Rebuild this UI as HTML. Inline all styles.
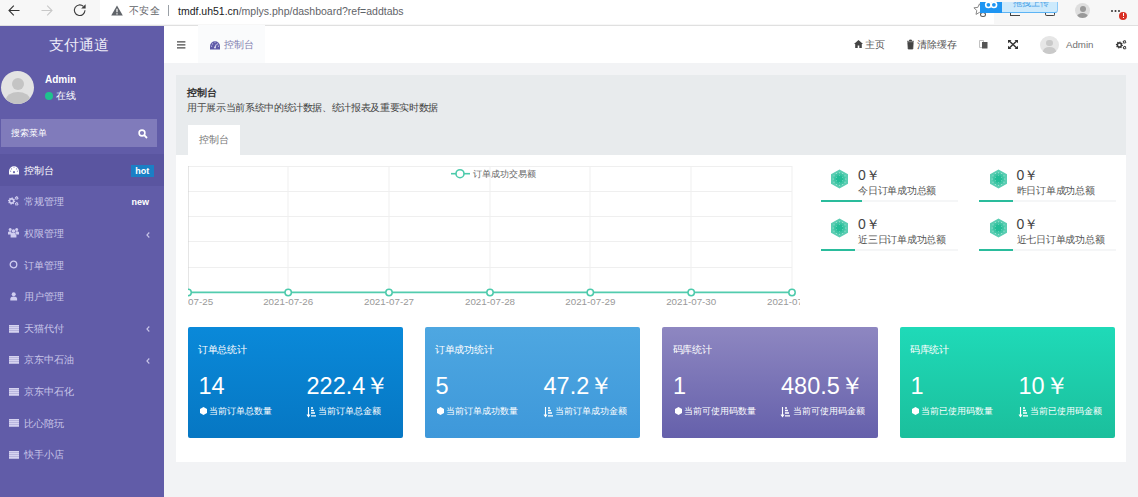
<!DOCTYPE html>
<html><head><meta charset="utf-8">
<style>
*{margin:0;padding:0;box-sizing:border-box}
html,body{width:1138px;height:497px;overflow:hidden;background:#f2f3f5;font-family:"Liberation Sans",sans-serif;position:relative}
.a{position:absolute;white-space:nowrap}
svg{position:absolute;overflow:visible}
/* browser bar */
#bb{left:0;top:0;width:1138px;height:25.5px;background:#f7f7f7;border-bottom:1px solid #e0e0e0}
#addr{left:100px;top:0;width:894px;height:24px;background:#fff}
.url{top:3.5px;font-size:10.5px;color:#5f6368;line-height:14px}
/* sidebar */
#sb{left:0;top:25.5px;width:164.2px;height:472px;background:#615ca8}
.mi{position:absolute;left:0;width:164.2px;height:31.6px;color:#cac7e8;font-size:10px}
.mi .tx{position:absolute;left:24px;top:10.5px;line-height:12px}
.mi svg{left:9px;top:11.5px}
.mi .ar{position:absolute;left:145px;top:12px;font-size:10px;line-height:12px}
/* header */
#hd{left:164.2px;top:25.5px;width:973.8px;height:37.5px;background:#fff}
.hx{top:38px;font-size:10px;color:#555;line-height:13px}
/* card */
#card{left:176px;top:74.5px;width:950px;height:387.5px;background:#fff}
#cardh{left:176px;top:74.5px;width:950px;height:80.3px;background:#e8ebed}
.sc{position:absolute;top:327px;width:215.5px;height:111px;border-radius:2px;color:#fff}
.sc .t{position:absolute;left:10.5px;top:16.2px;font-size:10px;letter-spacing:-0.3px}
.sc .n{position:absolute;top:45px;font-size:23.5px;line-height:28px}
.sc .l{position:absolute;top:78px;font-size:9px}
.sc svg{top:80px}
.st{position:absolute;width:137px;height:50px}
.st .v{position:absolute;left:37.5px;top:1px;font-size:14px;color:#444;line-height:16px}
.st .d{position:absolute;left:37.5px;top:17.5px;font-size:10px;letter-spacing:-0.25px;color:#555;line-height:13px}
.st .bar{position:absolute;left:0;top:34px;width:137px;height:2px;background:#f5f6f7}
.st .bar i{position:absolute;left:0;top:0;height:2px;background:#2abc9c}
</style></head><body>
<!-- browser bar -->
<div class="a" id="bb"></div>
<div class="a" id="addr"></div>
<svg style="left:8px;top:5px" width="12" height="11" viewBox="0 0 12 11"><path d="M11.5 5.5H1.2M5.8 0.6L1 5.5l4.8 4.9" fill="none" stroke="#333" stroke-width="1.1"/></svg>
<svg style="left:41px;top:5px" width="12" height="11" viewBox="0 0 12 11"><path d="M0.5 5.5h10.3M6.2 0.6L11 5.5l-4.8 4.9" fill="none" stroke="#c8c8c8" stroke-width="1.1"/></svg>
<svg style="left:72.5px;top:2.8px" width="14" height="14" viewBox="0 0 14 14"><path d="M12 7.3A5.3 5.3 0 1 1 10.4 3.4" fill="none" stroke="#3c3c3c" stroke-width="1.1"/><path d="M12.6 1.2V5.6H8.2z" fill="#3c3c3c"/></svg>
<svg style="left:110.5px;top:5px" width="12" height="11" viewBox="0 0 12 11"><path d="M6 0.5L11.8 10.6H0.2z" fill="#5f6368"/><path d="M6 3.8v3.4M6 8.3v1.1" stroke="#fff" stroke-width="1.2"/></svg>
<div class="a url" style="left:128.5px;font-size:10px;letter-spacing:0.5px">不安全</div>
<div class="a" style="left:168px;top:5px;width:1px;height:11px;background:#9aa0a6"></div>
<div class="a url" style="left:178px"><span style="color:#202124">tmdf.uh51.cn</span>/mplys.php/dashboard?ref=addtabs</div>
<!-- star -->
<svg style="left:973px;top:3px" width="13" height="13" viewBox="0 0 13 13"><path d="M6.5 0.8l1.7 3.6 3.9 0.4-2.9 2.7 0.8 3.9-3.5-2-3.5 2 0.8-3.9L0.9 4.8l3.9-0.4z" fill="none" stroke="#888" stroke-width="1"/></svg>
<div class="a" style="left:979.5px;top:12px;width:6px;height:5px;border-radius:50%;background:#fff;border:1.5px solid #555"></div>
<div class="a" style="left:1010px;top:12px;width:10px;height:4px;border-bottom:1.3px solid #444;border-left:1.3px solid #444"></div>
<div class="a" style="left:1045px;top:11px;width:10px;height:5px;border:1.3px solid #444;border-top:none;border-radius:0 0 2px 2px"></div>
<!-- upload widget -->
<div class="a" style="left:979.5px;top:1.5px;width:78px;height:11px;background:#cdeafc;border-bottom:1px solid #5db4f5;border-right:1px solid #8cc9f7;border-radius:0 0 3px 0"></div>
<div class="a" style="left:979.5px;top:1.5px;width:22.5px;height:11px;background:#1e95f2"></div>
<div class="a" style="left:979.5px;top:1.5px;width:78px;height:11px;overflow:hidden"><svg style="left:4.5px;top:-4px" width="14" height="12" viewBox="0 0 14 12"><circle cx="4.4" cy="6.8" r="2.7" fill="none" stroke="#fff" stroke-width="1.6"/><circle cx="9.9" cy="6.8" r="2.7" fill="none" stroke="#fff" stroke-width="1.6"/></svg><div class="a" style="left:33px;top:-4.5px;font-size:9px;color:#4ea4e6;line-height:12px">拖拽上传</div></div>

<!-- profile -->
<div class="a" style="left:1075px;top:3px;width:15px;height:15px;border-radius:50%;background:#dedede;overflow:hidden">
 <div class="a" style="left:4.5px;top:2.5px;width:6px;height:6px;border-radius:50%;background:#999"></div>
 <div class="a" style="left:2px;top:9.5px;width:11px;height:8px;border-radius:50%;background:#999"></div>
</div>
<div class="a" style="left:1111px;top:10px;width:2px;height:2px;border-radius:50%;background:#333;box-shadow:3.5px 0 0 #333,7px 0 0 #333"></div>
<div class="a" style="left:1119px;top:11.5px;width:8px;height:8px;border-radius:50%;background:#d93025"></div>
<div class="a" style="left:1122.5px;top:13px;width:1px;height:3px;background:#fff"></div><div class="a" style="left:1122.5px;top:17px;width:1px;height:1px;background:#fff"></div>

<!-- sidebar -->
<div class="a" id="sb"></div>
<div class="a" style="left:49px;top:36px;font-size:15px;color:#eceaf7;line-height:18px">支付通道</div>
<div class="a" style="left:1px;top:70.5px;width:33px;height:33px;border-radius:50%;background:#e3e3e3;overflow:hidden">
 <div class="a" style="left:10.5px;top:7px;width:12px;height:12px;border-radius:50%;background:#c4c4c4"></div>
 <div class="a" style="left:4.5px;top:21px;width:24px;height:16px;border-radius:50%;background:#c4c4c4"></div>
</div>
<div class="a" style="left:45px;top:73px;font-size:10px;font-weight:bold;color:#fff;line-height:13px">Admin</div>
<div class="a" style="left:45px;top:92px;width:8px;height:8px;border-radius:50%;background:#1fc28e"></div>
<div class="a" style="left:56px;top:90px;font-size:10px;color:#fff;line-height:12px">在线</div>
<div class="a" style="left:1px;top:119px;width:156px;height:28px;background:#807bbb"></div>
<div class="a" style="left:11px;top:127.5px;font-size:9px;color:#fff;line-height:11px">搜索菜单</div>
<svg style="left:138px;top:129px" width="10" height="10" viewBox="0 0 10 10"><circle cx="4" cy="4" r="2.9" fill="none" stroke="#fff" stroke-width="1.6"/><path d="M6.2 6.2L9 9" stroke="#fff" stroke-width="1.8"/></svg>

<div class="mi" style="top:154.3px;background:#5a55a0;color:#fff">
 <svg style="left:8.8px;top:11.3px" width="10" height="8.5" viewBox="0 0 10 8.5"><path d="M0 8.5V5.2A5 5 0 0 1 10 5.2V8.5z" fill="#fff"/><g fill="#8a86c0"><circle cx="2.5" cy="2.9" r="0.7"/><circle cx="7.5" cy="2.9" r="0.7"/><circle cx="1.6" cy="5.2" r="0.6"/><circle cx="8.4" cy="5.2" r="0.6"/><circle cx="5" cy="1.6" r="0.5"/></g><circle cx="5" cy="6.2" r="1.1" fill="#6a66ad"/></svg>
 <div class="tx">控制台</div>
 <div class="a" style="left:131px;top:10.5px;width:22.5px;height:12.5px;background:#1b7fc5;font-size:9px;font-weight:bold;color:#fff;line-height:12.5px;text-align:center">hot</div>
</div>
<div class="mi" style="top:185.9px">
 <svg style="left:8.3px;top:10.3px" width="11" height="10" viewBox="0 0 11 10"><path d="M7.28 5.36 L7.14 6.07 L6.16 6.37 L5.84 6.84 L5.95 7.86 L5.34 8.26 L4.44 7.78 L3.88 7.89 L3.24 8.68 L2.53 8.54 L2.23 7.56 L1.76 7.24 L0.74 7.35 L0.34 6.74 L0.82 5.84 L0.71 5.28 L-0.08 4.64 L0.06 3.93 L1.04 3.63 L1.36 3.16 L1.25 2.14 L1.86 1.74 L2.76 2.22 L3.32 2.11 L3.96 1.32 L4.67 1.46 L4.97 2.44 L5.44 2.76 L6.46 2.65 L6.86 3.26 L6.38 4.16 L6.49 4.72ZM4.90 5.00A1.3 1.3 0 1 0 2.30 5.00A1.3 1.3 0 1 0 4.90 5.00ZM10.58 2.25 L10.46 2.73 L9.85 2.88 L9.58 3.15 L9.43 3.76 L8.95 3.88 L8.51 3.44 L8.15 3.34 L7.54 3.51 L7.19 3.16 L7.36 2.55 L7.26 2.19 L6.82 1.75 L6.94 1.27 L7.55 1.12 L7.82 0.85 L7.97 0.24 L8.45 0.12 L8.89 0.56 L9.25 0.66 L9.86 0.49 L10.21 0.84 L10.04 1.45 L10.14 1.81ZM9.30 2.00A0.6 0.6 0 1 0 8.10 2.00A0.6 0.6 0 1 0 9.30 2.00ZM10.58 8.15 L10.46 8.63 L9.85 8.78 L9.58 9.05 L9.43 9.66 L8.95 9.78 L8.51 9.34 L8.15 9.24 L7.54 9.41 L7.19 9.06 L7.36 8.45 L7.26 8.09 L6.82 7.65 L6.94 7.17 L7.55 7.02 L7.82 6.75 L7.97 6.14 L8.45 6.02 L8.89 6.46 L9.25 6.56 L9.86 6.39 L10.21 6.74 L10.04 7.35 L10.14 7.71ZM9.30 7.90A0.6 0.6 0 1 0 8.10 7.90A0.6 0.6 0 1 0 9.30 7.90Z" fill="#d0cdf0" fill-rule="evenodd"/></svg>
 <div class="tx">常规管理</div>
 <div class="a" style="left:131.5px;top:10.5px;font-size:9px;font-weight:bold;color:#fff;line-height:12px">new</div>
</div>
<div class="mi" style="top:217.5px">
 <svg style="left:8.3px;top:10.8px" width="11" height="10" viewBox="0 0 11 10"><circle cx="2.2" cy="1.6" r="1.5" fill="#d0cdf0"/><circle cx="8.7" cy="1.6" r="1.5" fill="#d0cdf0"/><circle cx="5.5" cy="3" r="1.8" fill="#d0cdf0"/><path d="M0 6.5V4.2Q0.5 3.2 2.2 3.2Q3.2 3.2 3.5 4V6.5zM11 6.5V4.2Q10.5 3.2 8.7 3.2Q7.8 3.2 7.5 4V6.5zM2.6 9.5V6.2Q2.8 4.8 5.5 4.8T8.4 6.2V9.5z" fill="#d0cdf0"/></svg>
 <div class="tx">权限管理</div>
 <svg style="left:146px;top:14px" width="4" height="6" viewBox="0 0 4 6"><path d="M3.3 0.5L0.9 3l2.4 2.5" fill="none" stroke="#c8c5e8" stroke-width="1.1"/></svg>
</div>
<div class="mi" style="top:249.1px">
 <svg style="left:9.2px;top:10.7px" width="9" height="9" viewBox="0 0 9 9"><circle cx="4.5" cy="4.5" r="3.3" fill="none" stroke="#d0cdf0" stroke-width="1.3"/></svg>
 <div class="tx">订单管理</div>
</div>
<div class="mi" style="top:280.7px">
 <svg style="left:10px;top:11px" width="8" height="9" viewBox="0 0 8 9"><circle cx="3.7" cy="2.2" r="2" fill="#d0cdf0"/><path d="M0.3 8.5V6.8Q0.6 4.5 3.7 4.5T7.1 6.8V8.5z" fill="#d0cdf0"/></svg>
 <div class="tx">用户管理</div>
</div>
<div class="mi" style="top:312.3px">
 <svg style="top:12.3px" width="10" height="8" viewBox="0 0 10 8"><path d="M0 0.9h10M0 2.9h10M0 4.9h10M0 6.9h10" stroke="#d6d3f0" stroke-width="1.6"/></svg>
 <div class="tx">天猫代付</div>
 <svg style="left:146px;top:14px" width="4" height="6" viewBox="0 0 4 6"><path d="M3.3 0.5L0.9 3l2.4 2.5" fill="none" stroke="#c8c5e8" stroke-width="1.1"/></svg>
</div>
<div class="mi" style="top:343.9px">
 <svg style="top:12.3px" width="10" height="8" viewBox="0 0 10 8"><path d="M0 0.9h10M0 2.9h10M0 4.9h10M0 6.9h10" stroke="#d6d3f0" stroke-width="1.6"/></svg>
 <div class="tx">京东中石油</div>
 <svg style="left:146px;top:14px" width="4" height="6" viewBox="0 0 4 6"><path d="M3.3 0.5L0.9 3l2.4 2.5" fill="none" stroke="#c8c5e8" stroke-width="1.1"/></svg>
</div>
<div class="mi" style="top:375.5px">
 <svg style="top:12.3px" width="10" height="8" viewBox="0 0 10 8"><path d="M0 0.9h10M0 2.9h10M0 4.9h10M0 6.9h10" stroke="#d6d3f0" stroke-width="1.6"/></svg>
 <div class="tx">京东中石化</div>
</div>
<div class="mi" style="top:407.1px">
 <svg style="top:12.3px" width="10" height="8" viewBox="0 0 10 8"><path d="M0 0.9h10M0 2.9h10M0 4.9h10M0 6.9h10" stroke="#d6d3f0" stroke-width="1.6"/></svg>
 <div class="tx">比心陪玩</div>
</div>
<div class="mi" style="top:438.7px">
 <svg style="top:12.3px" width="10" height="8" viewBox="0 0 10 8"><path d="M0 0.9h10M0 2.9h10M0 4.9h10M0 6.9h10" stroke="#d6d3f0" stroke-width="1.6"/></svg>
 <div class="tx">快手小店</div>
</div>

<!-- header -->
<div class="a" id="hd"></div>
<svg style="left:176.8px;top:40.5px" width="8.4" height="8" viewBox="0 0 8.4 8"><path d="M0 0.9h8.4M0 3.95h8.4M0 6.9h8.4" stroke="#4a4a4a" stroke-width="1.2"/></svg>
<div class="a" style="left:198px;top:25px;width:66.5px;height:38px;background:#fafbfc"></div>
<svg style="left:210px;top:40.5px" width="10" height="8.5" viewBox="0 0 10 8.5"><path d="M0 8.5V5.2A5 5 0 0 1 10 5.2V8.5z" fill="#5f5aa8"/><g fill="#c9c7e6"><circle cx="2.5" cy="2.9" r="0.7"/><circle cx="7.5" cy="2.9" r="0.7"/><circle cx="1.6" cy="5.2" r="0.6"/><circle cx="8.4" cy="5.2" r="0.6"/><circle cx="5" cy="1.6" r="0.5"/></g><path d="M5 6.5L6.3 3.2" stroke="#e0def2" stroke-width="1"/><circle cx="5" cy="6.5" r="1" fill="#e0def2"/></svg>
<div class="a hx" style="left:224px;color:#8280b0">控制台</div>
<svg style="left:853.5px;top:40px" width="9" height="8" viewBox="0 0 9 8"><path d="M4.5 0L0 4h1.2v4h2.5V5.5h1.6V8h2.5V4H9z" fill="#444"/></svg>
<div class="a hx" style="left:865px">主页</div>
<svg style="left:907px;top:40px" width="7" height="9" viewBox="0 0 7 9"><path d="M0 1.3h7M2.5 1V0h2v1M0.8 2.3h5.4L5.8 9H1.2z" fill="#444" stroke="#444" stroke-width="0.8"/></svg>
<div class="a hx" style="left:917px">清除缓存</div>
<svg style="left:978.5px;top:40px" width="9" height="9" viewBox="0 0 9 9"><path d="M0.5 0.5h4v7h-4z" fill="none" stroke="#bbb" stroke-width="0.9"/><path d="M3 2h5.5v6.5H3z" fill="#555"/></svg>
<svg style="left:1008px;top:40px" width="10" height="9" viewBox="0 0 10 9"><path d="M1 0.8L9 8.2M9 0.8L1 8.2" stroke="#333" stroke-width="1.5"/><path d="M0 0h3.5L0 3.2zM10 0H6.5L10 3.2zM0 9h3.5L0 5.8zM10 9H6.5L10 5.8z" fill="#333"/></svg>
<div class="a" style="left:1040px;top:35.5px;width:18.5px;height:18.5px;border-radius:50%;background:#e6e6e6;overflow:hidden">
 <div class="a" style="left:6px;top:4px;width:6.5px;height:6.5px;border-radius:50%;background:#c9c9c9"></div>
 <div class="a" style="left:3px;top:11.5px;width:12.5px;height:9px;border-radius:50%;background:#c9c9c9"></div>
</div>
<div class="a hx" style="left:1066px;font-size:9.7px;color:#707070">Admin</div>
<svg style="left:1115.5px;top:39.5px" width="11" height="10" viewBox="0 0 11 10"><path d="M6.98 5.35 L6.84 6.05 L5.87 6.32 L5.56 6.78 L5.68 7.78 L5.10 8.17 L4.21 7.68 L3.67 7.79 L3.05 8.58 L2.35 8.44 L2.08 7.47 L1.62 7.16 L0.62 7.28 L0.23 6.70 L0.72 5.81 L0.61 5.27 L-0.18 4.65 L-0.04 3.95 L0.93 3.68 L1.24 3.22 L1.12 2.22 L1.70 1.83 L2.59 2.32 L3.13 2.21 L3.75 1.42 L4.45 1.56 L4.72 2.53 L5.18 2.84 L6.18 2.72 L6.57 3.30 L6.08 4.19 L6.19 4.73ZM4.65 5.00A1.25 1.25 0 1 0 2.15 5.00A1.25 1.25 0 1 0 4.65 5.00ZM10.38 2.15 L10.26 2.63 L9.65 2.78 L9.38 3.05 L9.23 3.66 L8.75 3.78 L8.31 3.34 L7.95 3.24 L7.34 3.41 L6.99 3.06 L7.16 2.45 L7.06 2.09 L6.62 1.65 L6.74 1.17 L7.35 1.02 L7.62 0.75 L7.77 0.14 L8.25 0.02 L8.69 0.46 L9.05 0.56 L9.66 0.39 L10.01 0.74 L9.84 1.35 L9.94 1.71ZM9.15 1.90A0.65 0.65 0 1 0 7.85 1.90A0.65 0.65 0 1 0 9.15 1.90ZM10.48 7.95 L10.36 8.43 L9.75 8.58 L9.48 8.85 L9.33 9.46 L8.85 9.58 L8.41 9.14 L8.05 9.04 L7.44 9.21 L7.09 8.86 L7.26 8.25 L7.16 7.89 L6.72 7.45 L6.84 6.97 L7.45 6.82 L7.72 6.55 L7.87 5.94 L8.35 5.82 L8.79 6.26 L9.15 6.36 L9.76 6.19 L10.11 6.54 L9.94 7.15 L10.04 7.51ZM9.25 7.70A0.65 0.65 0 1 0 7.95 7.70A0.65 0.65 0 1 0 9.25 7.70Z" fill="#3a3a3a" fill-rule="evenodd"/></svg>

<!-- card -->
<div class="a" id="card"></div>
<div class="a" id="cardh"></div>
<div class="a" style="left:187px;top:86px;font-size:10px;font-weight:bold;color:#333;line-height:13px">控制台</div>
<div class="a" style="left:187px;top:102px;font-size:10px;letter-spacing:-0.35px;color:#444;line-height:12px">用于展示当前系统中的统计数据、统计报表及重要实时数据</div>
<div class="a" style="left:188px;top:125px;width:51.5px;height:30px;background:#fff"></div>
<div class="a" style="left:199px;top:133px;font-size:9.8px;color:#777;line-height:13px">控制台</div>

<!-- chart -->
<div class="a" style="left:187.5px;top:155px;width:612px;height:160px;overflow:hidden">
<svg style="left:0;top:0" width="612" height="160" viewBox="187.5 155 612 160">
 <g stroke="#efefef" stroke-width="1">
  <path d="M187.5 166.5h604M187.5 191.5h604M187.5 216.5h604M187.5 241.5h604M187.5 267.5h604"/>
  <path d="M287.5 166v126.5M388.5 166v126.5M489.5 166v126.5M589.5 166v126.5M690.5 166v126.5M791.5 166v126.5"/>
 </g>
 <path d="M187.5 166v126.5" stroke="#cccccc" stroke-width="1"/>
 <path d="M187.5 292.3h604" stroke="#52ccae" stroke-width="1.7"/>
 <g fill="#fff" stroke="#4ccaab" stroke-width="1.5">
  <circle cx="187.6" cy="292.5" r="3.2"/><circle cx="287.7" cy="292.5" r="3.2"/><circle cx="388.5" cy="292.5" r="3.2"/><circle cx="489.5" cy="292.5" r="3.2"/><circle cx="589.8" cy="292.5" r="3.2"/><circle cx="690.7" cy="292.5" r="3.2"/><circle cx="791.5" cy="292.5" r="3.2"/>
 </g>
 <g font-size="9.8" fill="#999" text-anchor="middle" font-family="Liberation Sans">
  <text x="187.6" y="305">2021-07-25</text><text x="287.7" y="305">2021-07-26</text><text x="388.5" y="305">2021-07-27</text><text x="489.5" y="305">2021-07-28</text><text x="589.8" y="305">2021-07-29</text><text x="690.7" y="305">2021-07-30</text><text x="791.5" y="305">2021-07-31</text>
 </g>
 <path d="M450.5 173.7h19" stroke="#4ccaab" stroke-width="1.6"/>
 <circle cx="459.5" cy="173.7" r="4" fill="#fff" stroke="#4ccaab" stroke-width="1.6"/>
 <text x="472.5" y="177" font-size="9" fill="#666" font-family="Liberation Sans">订单成功交易额</text>
</svg>
</div>

<!-- stat items -->
<div class="st" style="left:820.5px;top:166px">
 <svg style="left:9.5px;top:3px" width="19" height="20" viewBox="0 0 19 20"><path d="M9.5 0.5L18 5.2v9.6L9.5 19.5 1 14.8V5.2z" fill="#5acdb2"/><path d="M9.5 3.2L15.4 6.6v6.8L9.5 16.8 3.6 13.4V6.6z" fill="#3fc6a5"/><circle cx="9.5" cy="10" r="3.8" fill="#22bd97"/><g fill="#b4ebdc"><circle cx="15.80" cy="10.00" r="0.55"/><circle cx="14.96" cy="13.15" r="0.55"/><circle cx="12.65" cy="15.46" r="0.55"/><circle cx="9.50" cy="16.30" r="0.55"/><circle cx="6.35" cy="15.46" r="0.55"/><circle cx="4.04" cy="13.15" r="0.55"/><circle cx="3.20" cy="10.00" r="0.55"/><circle cx="4.04" cy="6.85" r="0.55"/><circle cx="6.35" cy="4.54" r="0.55"/><circle cx="9.50" cy="3.70" r="0.55"/><circle cx="12.65" cy="4.54" r="0.55"/><circle cx="14.96" cy="6.85" r="0.55"/><circle cx="12.62" cy="11.80" r="0.45"/><circle cx="9.50" cy="13.60" r="0.45"/><circle cx="6.38" cy="11.80" r="0.45"/><circle cx="6.38" cy="8.20" r="0.45"/><circle cx="9.50" cy="6.40" r="0.45"/><circle cx="12.62" cy="8.20" r="0.45"/></g></svg>
 <div class="v">0￥</div><div class="d">今日订单成功总额</div>
 <div class="bar"><i style="width:41.5px"></i></div>
</div>
<div class="st" style="left:979px;top:166px">
 <svg style="left:9.5px;top:3px" width="19" height="20" viewBox="0 0 19 20"><path d="M9.5 0.5L18 5.2v9.6L9.5 19.5 1 14.8V5.2z" fill="#5acdb2"/><path d="M9.5 3.2L15.4 6.6v6.8L9.5 16.8 3.6 13.4V6.6z" fill="#3fc6a5"/><circle cx="9.5" cy="10" r="3.8" fill="#22bd97"/><g fill="#b4ebdc"><circle cx="15.80" cy="10.00" r="0.55"/><circle cx="14.96" cy="13.15" r="0.55"/><circle cx="12.65" cy="15.46" r="0.55"/><circle cx="9.50" cy="16.30" r="0.55"/><circle cx="6.35" cy="15.46" r="0.55"/><circle cx="4.04" cy="13.15" r="0.55"/><circle cx="3.20" cy="10.00" r="0.55"/><circle cx="4.04" cy="6.85" r="0.55"/><circle cx="6.35" cy="4.54" r="0.55"/><circle cx="9.50" cy="3.70" r="0.55"/><circle cx="12.65" cy="4.54" r="0.55"/><circle cx="14.96" cy="6.85" r="0.55"/><circle cx="12.62" cy="11.80" r="0.45"/><circle cx="9.50" cy="13.60" r="0.45"/><circle cx="6.38" cy="11.80" r="0.45"/><circle cx="6.38" cy="8.20" r="0.45"/><circle cx="9.50" cy="6.40" r="0.45"/><circle cx="12.62" cy="8.20" r="0.45"/></g></svg>
 <div class="v">0￥</div><div class="d">昨日订单成功总额</div>
 <div class="bar"><i style="width:34px"></i></div>
</div>
<div class="st" style="left:820.5px;top:215px">
 <svg style="left:9.5px;top:3px" width="19" height="20" viewBox="0 0 19 20"><path d="M9.5 0.5L18 5.2v9.6L9.5 19.5 1 14.8V5.2z" fill="#5acdb2"/><path d="M9.5 3.2L15.4 6.6v6.8L9.5 16.8 3.6 13.4V6.6z" fill="#3fc6a5"/><circle cx="9.5" cy="10" r="3.8" fill="#22bd97"/><g fill="#b4ebdc"><circle cx="15.80" cy="10.00" r="0.55"/><circle cx="14.96" cy="13.15" r="0.55"/><circle cx="12.65" cy="15.46" r="0.55"/><circle cx="9.50" cy="16.30" r="0.55"/><circle cx="6.35" cy="15.46" r="0.55"/><circle cx="4.04" cy="13.15" r="0.55"/><circle cx="3.20" cy="10.00" r="0.55"/><circle cx="4.04" cy="6.85" r="0.55"/><circle cx="6.35" cy="4.54" r="0.55"/><circle cx="9.50" cy="3.70" r="0.55"/><circle cx="12.65" cy="4.54" r="0.55"/><circle cx="14.96" cy="6.85" r="0.55"/><circle cx="12.62" cy="11.80" r="0.45"/><circle cx="9.50" cy="13.60" r="0.45"/><circle cx="6.38" cy="11.80" r="0.45"/><circle cx="6.38" cy="8.20" r="0.45"/><circle cx="9.50" cy="6.40" r="0.45"/><circle cx="12.62" cy="8.20" r="0.45"/></g></svg>
 <div class="v">0￥</div><div class="d">近三日订单成功总额</div>
 <div class="bar"><i style="width:34px"></i></div>
</div>
<div class="st" style="left:979px;top:215px">
 <svg style="left:9.5px;top:3px" width="19" height="20" viewBox="0 0 19 20"><path d="M9.5 0.5L18 5.2v9.6L9.5 19.5 1 14.8V5.2z" fill="#5acdb2"/><path d="M9.5 3.2L15.4 6.6v6.8L9.5 16.8 3.6 13.4V6.6z" fill="#3fc6a5"/><circle cx="9.5" cy="10" r="3.8" fill="#22bd97"/><g fill="#b4ebdc"><circle cx="15.80" cy="10.00" r="0.55"/><circle cx="14.96" cy="13.15" r="0.55"/><circle cx="12.65" cy="15.46" r="0.55"/><circle cx="9.50" cy="16.30" r="0.55"/><circle cx="6.35" cy="15.46" r="0.55"/><circle cx="4.04" cy="13.15" r="0.55"/><circle cx="3.20" cy="10.00" r="0.55"/><circle cx="4.04" cy="6.85" r="0.55"/><circle cx="6.35" cy="4.54" r="0.55"/><circle cx="9.50" cy="3.70" r="0.55"/><circle cx="12.65" cy="4.54" r="0.55"/><circle cx="14.96" cy="6.85" r="0.55"/><circle cx="12.62" cy="11.80" r="0.45"/><circle cx="9.50" cy="13.60" r="0.45"/><circle cx="6.38" cy="11.80" r="0.45"/><circle cx="6.38" cy="8.20" r="0.45"/><circle cx="9.50" cy="6.40" r="0.45"/><circle cx="12.62" cy="8.20" r="0.45"/></g></svg>
 <div class="v">0￥</div><div class="d">近七日订单成功总额</div>
 <div class="bar"><i style="width:34px"></i></div>
</div>

<!-- stat cards -->
<div class="sc" style="left:187.5px;background:linear-gradient(#0a89d9,#0677c3)">
 <div class="t">订单总统计</div>
 <div class="n" style="left:11px">14</div>
 <div class="n" style="left:119px">222.4￥</div>
 <svg style="left:12.5px" width="7" height="8" viewBox="0 0 7 8"><path d="M3.5 0L7 2v4L3.5 8 0 6V2z" fill="#fff"/></svg>
 <div class="l" style="left:21.5px">当前订单总数量</div>
 <svg style="left:119px" width="9" height="10" viewBox="0 0 9 10"><path d="M1.5 0v9M0 7.5l1.5 2 1.5-2" fill="none" stroke="#fff" stroke-width="1.1"/><path d="M4 1h2M4 3.5h3M4 6h4M4 8.8h5" stroke="#fff" stroke-width="1.3"/></svg>
 <div class="l" style="left:130.5px">当前订单总金额</div>
</div>
<div class="sc" style="left:424.5px;background:linear-gradient(#4ea7e1,#3e98da)">
 <div class="t">订单成功统计</div>
 <div class="n" style="left:11px">5</div>
 <div class="n" style="left:119px">47.2￥</div>
 <svg style="left:12.5px" width="7" height="8" viewBox="0 0 7 8"><path d="M3.5 0L7 2v4L3.5 8 0 6V2z" fill="#fff"/></svg>
 <div class="l" style="left:21.5px">当前订单成功数量</div>
 <svg style="left:119px" width="9" height="10" viewBox="0 0 9 10"><path d="M1.5 0v9M0 7.5l1.5 2 1.5-2" fill="none" stroke="#fff" stroke-width="1.1"/><path d="M4 1h2M4 3.5h3M4 6h4M4 8.8h5" stroke="#fff" stroke-width="1.3"/></svg>
 <div class="l" style="left:130.5px">当前订单成功金额</div>
</div>
<div class="sc" style="left:662px;background:linear-gradient(#8e87c1,#6560ab)">
 <div class="t">码库统计</div>
 <div class="n" style="left:11px">1</div>
 <div class="n" style="left:119px">480.5￥</div>
 <svg style="left:12.5px" width="7" height="8" viewBox="0 0 7 8"><path d="M3.5 0L7 2v4L3.5 8 0 6V2z" fill="#fff"/></svg>
 <div class="l" style="left:21.5px">当前可使用码数量</div>
 <svg style="left:119px" width="9" height="10" viewBox="0 0 9 10"><path d="M1.5 0v9M0 7.5l1.5 2 1.5-2" fill="none" stroke="#fff" stroke-width="1.1"/><path d="M4 1h2M4 3.5h3M4 6h4M4 8.8h5" stroke="#fff" stroke-width="1.3"/></svg>
 <div class="l" style="left:130.5px">当前可使用码金额</div>
</div>
<div class="sc" style="left:899.5px;background:linear-gradient(#1fdab8,#1bbf9c)">
 <div class="t">码库统计</div>
 <div class="n" style="left:11px">1</div>
 <div class="n" style="left:119px">10￥</div>
 <svg style="left:12.5px" width="7" height="8" viewBox="0 0 7 8"><path d="M3.5 0L7 2v4L3.5 8 0 6V2z" fill="#fff"/></svg>
 <div class="l" style="left:21.5px">当前已使用码数量</div>
 <svg style="left:119px" width="9" height="10" viewBox="0 0 9 10"><path d="M1.5 0v9M0 7.5l1.5 2 1.5-2" fill="none" stroke="#fff" stroke-width="1.1"/><path d="M4 1h2M4 3.5h3M4 6h4M4 8.8h5" stroke="#fff" stroke-width="1.3"/></svg>
 <div class="l" style="left:130.5px">当前已使用码金额</div>
</div>
</body></html>
